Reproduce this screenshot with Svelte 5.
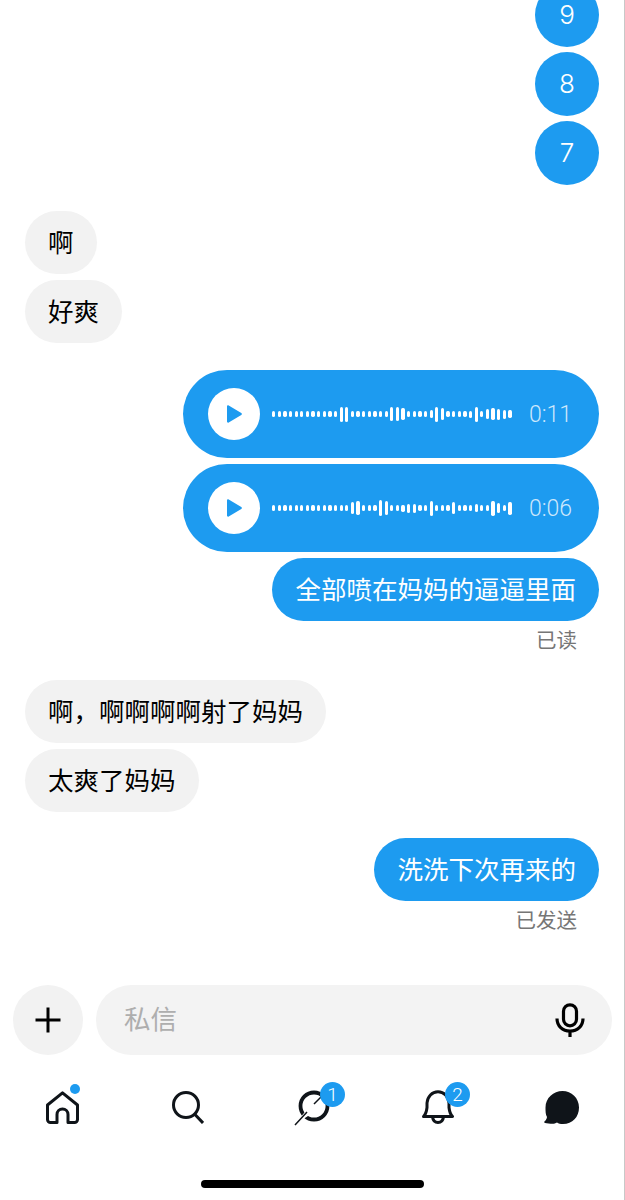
<script lang="ts">
  const dots = (n: number) => Array(n).fill(5.5);
  const waveA = [...dots(12), 15, 15, 6, 5.5, 5.5, 5.5, 5.5, 5.5, 5.5, 14, 14, 12, 6, 5.5, 5.5, 5.5, 8, 15, 12, 6, 5.5, 5.5, 5.5, 7, 15, 6, 10, 12, 11, 9, 8];
  const waveB = [...dots(14), 12, 14, 5.5, 5.5, 5.5, 16, 14, 6, 6, 7, 9, 9, 6, 6, 15, 6, 6, 6, 12, 5.5, 5.5, 5.5, 8, 6, 6, 15, 10, 5.5, 13];
</script>

{#snippet voice(wave: number[], time: string)}
  <div class="voice">
    <span class="play">
      <svg width="18" height="20" viewBox="0 0 18 20"><path d="M2 2.500v15c0 1 .9 1.500 1.700 1l12.600-7.500c.8-.5.8-1.500 0-2L3.700 1.500C2.900 1 2 1.500 2 2.500z" fill="#1d9bf0" /></svg>
    </span>
    <span class="wave">
      {#each wave as h, i (i)}
        <i style="height: {h}px"></i>
      {/each}
    </span>
    <span class="time">{time}</span>
  </div>
{/snippet}

<div class="screen">
  <main class="thread">
    <div class="group mine first">
      <div class="bubble round">9</div>
      <div class="bubble round">8</div>
      <div class="bubble round">7</div>
    </div>

    <div class="group theirs">
      <div class="bubble">啊</div>
      <div class="bubble">好爽</div>
    </div>

    <div class="group mine">
      {@render voice(waveA, '0:11')}
      {@render voice(waveB, '0:06')}
      <div class="bubble">全部喷在妈妈的逼逼里面</div>
      <div class="status">已读</div>
    </div>

    <div class="group theirs after-status">
      <div class="bubble">啊，啊啊啊啊射了妈妈</div>
      <div class="bubble">太爽了妈妈</div>
    </div>

    <div class="group mine last">
      <div class="bubble">洗洗下次再来的</div>
      <div class="status">已发送</div>
    </div>
  </main>

  <div class="composer">
    <button class="add" aria-label="add">
      <svg width="28" height="28" viewBox="0 0 28 28"><path d="M14 1.500v25M1.500 14h25" stroke="#000" stroke-width="3" fill="none" /></svg>
    </button>
    <div class="field">
      <span class="placeholder">私信</span>
      <svg width="30" height="34" viewBox="0 0 30 34" fill="none" stroke="#000" stroke-width="3.200">
        <rect x="8.500" y="1.800" width="13" height="21" rx="6.500" />
        <path d="M2 15.500c0 7.500 5.500 12.500 13 12.500s13-5 13-12.500M15 28v6" />
      </svg>
    </div>
  </div>

  <nav class="tabs">
    <div class="tab">
      <svg width="33" height="33" viewBox="0 0 33 33" fill="none" stroke="#0f1419" stroke-width="3" stroke-linejoin="round">
        <path d="M1.500 14 16.500 1.800 31.500 14v14.500a3 3 0 0 1-3 3H22v-8a5.500 5.500 0 0 0-11 0v8H4.500a3 3 0 0 1-3-3z" />
      </svg>
      <span class="dot"></span>
    </div>
    <div class="tab">
      <svg width="32" height="33" viewBox="0 0 32 33" fill="none" stroke="#0f1419" stroke-width="3">
        <circle cx="14" cy="14" r="12.500" />
        <path d="m22.500 23 8.500 9" />
      </svg>
    </div>
    <div class="tab">
      <svg width="38" height="38" viewBox="0 0 38 38" fill="none">
        <circle cx="20" cy="18" r="13.500" stroke="#0f1419" stroke-width="3.800" />
        <path d="M36 0 22 15 10 25 0 37l14-9L26 18z" fill="#fff" />
        <path d="M28 8 20 16M13 24 1 37" stroke="#0f1419" stroke-width="1.500" />
      </svg>
      <span class="badge">1</span>
    </div>
    <div class="tab">
      <svg width="32" height="34" viewBox="0 0 32 34" fill="none" stroke="#0f1419" stroke-width="3">
        <path d="M1.500 26.500c2-2 3-4.500 3.500-9V13C5.500 6.500 10 1.800 16 1.800S26.500 6.500 27 13v4.500c.5 4.500 1.500 7 3.500 9z" stroke-linejoin="round" />
        <path d="M10.500 27c.5 3.500 2.500 5.500 5.500 5.500s5-2 5.500-5.500" />
      </svg>
      <span class="badge">2</span>
    </div>
    <div class="tab">
      <svg class="chat" width="35" height="33" viewBox="0 0 35 33">
        <path d="M18.500 0C27.500 0 35 7 35 16.500S28.500 33 19 33c-2.500 0-4.500-.5-6-1.500-1.500 1-3 1.300-4.500 1.300-2.500 0-5.500-.3-7.500-.8-.9-.3-1.200-1-.5-1.500C2 29 2.800 27.500 3 26 1.500 23.500 1.500 20 1.500 16.500 1.500 7 9.500 0 18.500 0z" fill="#0f1419" />
      </svg>
    </div>
  </nav>

  <div class="home-wrap"><div class="home-bar"></div></div>
</div>

<style>
  :global(body) {
    background: #fff;
  }

  .screen {
    width: 625px;
    height: 1200px;
    box-sizing: border-box;
    border-right: 1px solid #c8c8c8;
    overflow: hidden;
    display: flex;
    flex-direction: column;
    font-family: Inter, 'Noto Sans CJK SC', sans-serif;
    color: #000;
  }

  .thread {
    height: 985px;
    display: flex;
    flex-direction: column;
  }

  .group {
    display: flex;
    flex-direction: column;
    gap: 6px;
    margin-top: 27px;
  }

  .group.first {
    margin-top: -17px;
  }

  .group.after-status {
    margin-top: 24px;
  }

  .group.last {
    margin-top: 26px;
  }

  .mine {
    align-items: flex-end;
    padding-right: 25px;
  }

  .theirs {
    align-items: flex-start;
    padding-left: 25px;
  }

  .bubble {
    height: 63px;
    padding: 0 23px;
    border-radius: 32px;
    display: flex;
    align-items: center;
    font-size: 25.500px;
    line-height: 1;
    white-space: nowrap;
  }

  .mine .bubble {
    background: #1d9bf0;
    color: #fff;
  }

  .theirs .bubble {
    background: #f2f2f2;
    color: #000;
  }

  .bubble.round {
    width: 64px;
    height: 64px;
    padding: 0;
    justify-content: center;
    margin-bottom: -1px;
    font-size: 26px;
    font-weight: 300;
  }

  .voice {
    width: 416px;
    height: 88px;
    box-sizing: border-box;
    padding-left: 25px;
    border-radius: 44px;
    background: #1d9bf0;
    display: flex;
    align-items: center;
  }

  .play {
    width: 52px;
    height: 52px;
    border-radius: 50%;
    background: #fff;
    display: flex;
    align-items: center;
    justify-content: center;
  }

  .wave {
    width: 240px;
    margin-left: 12px;
    display: flex;
    align-items: center;
    justify-content: space-between;
  }

  .wave i {
    width: 3.300px;
    border-radius: 1.650px;
    background: #fff;
  }

  .time {
    margin-left: 17px;
    font-family: Roboto, sans-serif;
    font-size: 23px;
    font-weight: 300;
    color: rgba(255, 255, 255, 0.78);
  }

  .status {
    margin-top: -1px;
    padding-right: 22px;
    height: 30px;
    line-height: 30px;
    font-size: 20.500px;
    color: #767676;
  }

  .composer {
    display: flex;
    gap: 13px;
    padding: 0 12px 0 13px;
  }

  .add {
    width: 70px;
    height: 70px;
    flex: none;
    border: 0;
    padding: 0;
    border-radius: 50%;
    background: #f2f2f2;
    display: flex;
    align-items: center;
    justify-content: center;
  }

  .field {
    flex: 1;
    height: 70px;
    box-sizing: border-box;
    padding: 0 27px 0 28px;
    border-radius: 35px;
    background: #f3f3f3;
    display: flex;
    align-items: center;
    justify-content: space-between;
  }

  .placeholder {
    font-size: 26.500px;
    line-height: 1;
    margin-top: -2px;
    color: #aeaeae;
  }

  .tabs {
    display: grid;
    grid-template-columns: repeat(5, 125px);
    margin-top: 32px;
    height: 40px;
  }

  .tab {
    position: relative;
    display: flex;
    align-items: center;
    justify-content: center;
  }

  .chat {
    margin-left: -2px;
  }

  .dot {
    position: absolute;
    left: 70px;
    top: -3px;
    width: 10px;
    height: 10px;
    border-radius: 50%;
    background: #1d9bf0;
  }

  .badge {
    position: absolute;
    left: 70px;
    top: -5px;
    width: 25px;
    height: 25px;
    border-radius: 50%;
    background: #1d9bf0;
    color: #fff;
    font-family: Roboto, sans-serif;
    font-size: 19px;
    font-weight: 300;
    line-height: 25px;
    text-align: center;
  }

  .home-wrap {
    flex: 1;
    display: flex;
    justify-content: center;
    padding-top: 53px;
  }

  .home-bar {
    width: 223px;
    height: 8px;
    border-radius: 4px;
    background: #000;
  }
</style>
